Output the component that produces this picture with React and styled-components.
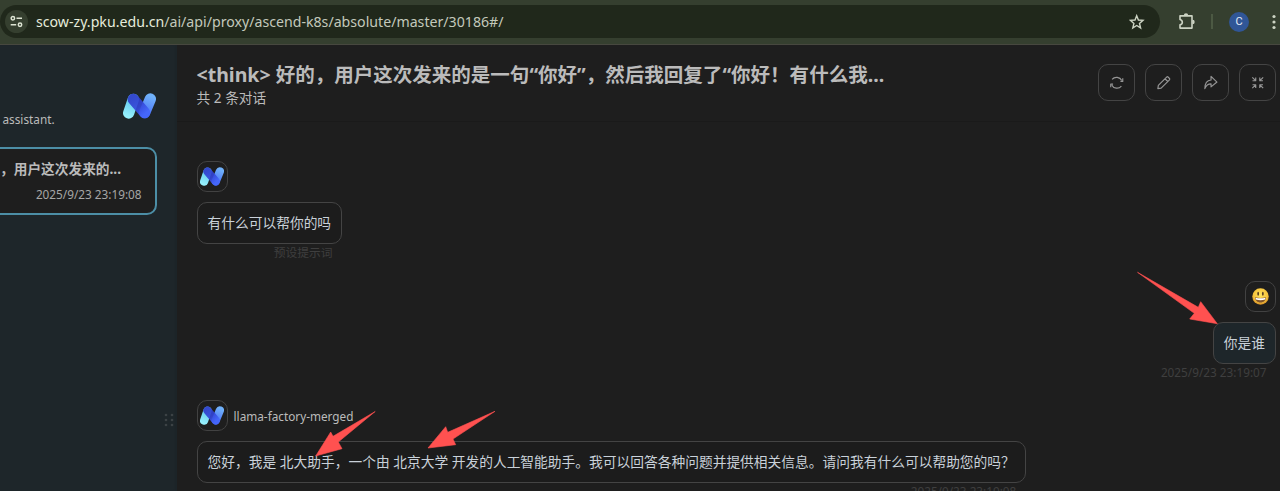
import React from "react";
import styled, { createGlobalStyle } from "styled-components";

const Global = createGlobalStyle`
  *, *::before, *::after { box-sizing: border-box; }
  body {
    margin: 0;
    overflow: hidden;
    background: #1e1e1e;
    color: #bbb;
    font-family: "Noto Sans", "Noto Sans CJK SC", sans-serif;
  }
  svg { display: block; }
`;

const Page = styled.div`
  position: relative;
  display: flex;
  flex-direction: column;
  width: 1280px;
  height: 491px;
  overflow: hidden;
`;

const BrowserBar = styled.div`
  flex: none;
  display: flex;
  align-items: center;
  height: 45px;
  padding-bottom: 1px;
  background: #353f2f;
  border-bottom: 1px solid #47483f;
`;

const Omnibox = styled.div`
  display: flex;
  align-items: center;
  width: 1160px;
  height: 33px;
  padding: 0 15px 0 5px;
  border-radius: 17px;
  background: #20281b;
`;

const SiteInfo = styled.span`
  display: grid;
  place-items: center;
  width: 23px;
  height: 23px;
  margin-right: 8px;
  border-radius: 50%;
  background: #353f2f;
`;

const Url = styled.span`
  flex: 1;
  font-size: 14.17px;
  line-height: 20px;
  white-space: nowrap;
  color: #c3c9bb;
`;

const Host = styled.span`
  color: #e6ecdc;
`;

const BarTools = styled.div`
  display: flex;
  align-items: center;
  flex: 1;
  padding-left: 18px;
`;

const BarDivider = styled.i`
  width: 2px;
  height: 15px;
  margin: 0 16px 0 15px;
  background: #4c5943;
`;

const Profile = styled.span`
  display: grid;
  place-items: center;
  width: 20px;
  height: 20px;
  margin-right: 23px;
  border-radius: 50%;
  background: #305697;
  color: #e4eaf5;
  font: 11px/20px Roboto, sans-serif;
`;

const Workspace = styled.div`
  flex: 1;
  display: flex;
  min-height: 0;
`;

const Sidebar = styled.aside`
  flex: none;
  display: flex;
  flex-direction: column;
  width: 176.5px;
  background: #1e262a;
  box-shadow: inset -2px 0 2px rgba(0, 0, 0, 0.05);
`;

const SidebarHead = styled.div`
  display: flex;
  justify-content: space-between;
  height: 102px;
  padding: 47.5px 20.5px 0 2.5px;
`;

const Tagline = styled.div`
  padding-top: 17.5px;
  font-size: 11.78px;
  line-height: 18px;
`;

const ChatItem = styled.div`
  width: 177px;
  height: 68px;
  margin-left: -20px;
  padding: 10px 13.500px 0 18px;
  border: 2px solid #4c8ea6;
  border-radius: 10px;
  background: #1e1e1e;
`;

const ChatName = styled.div`
  font-size: 13.7px;
  font-weight: 700;
  line-height: 20px;
  white-space: nowrap;
`;

const ChatDate = styled.div`
  margin-top: 7px;
  font-size: 11.78px;
  line-height: 16px;
  text-align: right;
  color: #a6a6a6;
`;

const DragHandle = styled.div`
  margin: auto 1.5px 64px auto;
`;

const Chat = styled.main`
  flex: 1;
  display: flex;
  flex-direction: column;
  min-width: 0;
`;

const ChatHeader = styled.header`
  flex: none;
  display: flex;
  justify-content: space-between;
  height: 77px;
  padding: 15.5px 4px 0 20px;
  border-bottom: 1px solid #1a1a1a;
`;

const Title = styled.h1`
  margin: 0;
  font-size: 19.53px;
  font-weight: 700;
  line-height: 27px;
  white-space: nowrap;
`;

const Subtitle = styled.div`
  font-size: 13.7px;
  line-height: 20px;
`;

const Actions = styled.div`
  display: flex;
  gap: 9.6px;
  padding-top: 3.5px;
`;

const ActionButton = styled.button`
  display: grid;
  place-items: center;
  width: 37.4px;
  height: 37.4px;
  padding: 0;
  border: 1px solid #444;
  border-radius: 10px;
  background: transparent;
  color: #969696;
`;

const Messages = styled.div`
  flex: 1;
  display: flex;
  flex-direction: column;
  padding: 39px 4px 0 20px;
`;

const Message = styled.article`
  display: flex;
  flex-direction: column;
  flex: none;
  align-items: ${(p) => (p.$user ? "flex-end" : "flex-start")};
  align-self: ${(p) => (p.$user ? "flex-end" : "flex-start")};
  height: ${(p) => p.$height}px;
`;

const Author = styled.div`
  display: flex;
  align-items: center;
  gap: 5.7px;
  font-size: 11.78px;
`;

const Avatar = styled.div`
  display: grid;
  place-items: center;
  width: 31.4px;
  height: 31px;
  border: 1px solid #424242;
  border-radius: 10px;
`;

const Bubble = styled.div`
  height: 42px;
  margin-top: 10px;
  padding: 0 10px;
  border: 1px solid #444;
  border-radius: 10px;
  background: ${(p) => (p.$user ? "#1e262a" : "#1c1c1c")};
  color: #c9d1d9;
  font-size: 13.74px;
  line-height: 40px;
  white-space: nowrap;
`;

const Stamp = styled.div`
  align-self: flex-end;
  padding-right: 9.5px;
  font-size: 11.78px;
  line-height: 17px;
  color: #3f3f3f;
`;

const Arrows = styled.svg`
  position: absolute;
  inset: 0;
  pointer-events: none;
`;

function Logo({ id, width, height }) {
  return (
    <svg width={width} height={height} viewBox="0 0 99 78">
      <defs>
        <linearGradient id={`${id}a`} gradientUnits="userSpaceOnUse" x1="30" y1="20" x2="12" y2="70">
          <stop offset="0" stopColor="#62c9ee" />
          <stop offset="1" stopColor="#96f0fc" />
        </linearGradient>
        <linearGradient id={`${id}b`} gradientUnits="userSpaceOnUse" x1="85" y1="10" x2="60" y2="70">
          <stop offset="0" stopColor="#70b1fa" />
          <stop offset="1" stopColor="#4468f8" />
        </linearGradient>
        <linearGradient id={`${id}c`} gradientUnits="userSpaceOnUse" x1="28" y1="16" x2="66" y2="62">
          <stop offset="0" stopColor="#2f3ccb" />
          <stop offset="0.55" stopColor="#3347da" />
          <stop offset="1" stopColor="#4465fb" />
        </linearGradient>
      </defs>
      <g fill="none" strokeWidth="34" strokeLinecap="round">
        <path d="M31 19 17 60" stroke={`url(#${id}a)`} />
        <path d="M82 18 65 59" stroke={`url(#${id}b)`} />
        <path d="M31 19 65 59" stroke={`url(#${id}c)`} strokeOpacity="0.9" />
      </g>
    </svg>
  );
}

const ICONS = {
  reload: (
    <>
      <path d="M3.2 4.600A6 6 0 0 1 13.200 5.800M12.800 11.400A6 6 0 0 1 2.800 10.200" />
      <path d="M14.200 3.400v3.200h-2.400M1.800 12.600V9.400h2.400" />
    </>
  ),
  rename: (
    <path d="M1.900 14.100l.5-3.300L11 2.100a1 1 0 0 1 1.400 0l1.500 1.500a1 1 0 0 1 0 1.400L5.300 13.500 1.900 14.100ZM9.300 3.900l2.800 2.800" />
  ),
  share: (
    <path d="M8.300 1.500 14.400 7.300 8.300 12.300V9.200C5.500 9.200 3.200 10.700 1.900 14.100 1.900 9.400 3.800 5.600 8.300 5.200V1.500Z" />
  ),
  shrink: (
    <path d="M2.400 2.400 5.800 5.800M2.600 5.900H5.900V2.600M13.600 2.400 10.200 5.800M13.400 5.900H10.100V2.600M2.400 13.600 5.800 10.200M2.600 10.100H5.900v3.300M13.600 13.600 10.200 10.200M13.400 10.100H10.100v3.300" />
  ),
};

function Icon({ name }) {
  return (
    <svg width="15.5" height="15.5" viewBox="0 0 16 16" fill="none" stroke="currentColor" strokeWidth="1.2" strokeLinejoin="round">
      {ICONS[name]}
    </svg>
  );
}

function Smiley() {
  return (
    <svg width="17" height="17" viewBox="0 0 34 34">
      <defs>
        <radialGradient id="face" cx="0.5" cy="0.4" r="0.6">
          <stop offset="0" stopColor="#ffe45e" />
          <stop offset="0.7" stopColor="#f6c43c" />
          <stop offset="1" stopColor="#d08a26" />
        </radialGradient>
      </defs>
      <circle cx="17" cy="17" r="16.5" fill="url(#face)" />
      <ellipse cx="12.3" cy="11.5" rx="1.8" ry="4" fill="#593d20" />
      <ellipse cx="21.7" cy="11.5" rx="1.8" ry="4" fill="#593d20" />
      <path d="M6 18.5q11 3 22 0c0 6-4.5 10.5-11 10.5S6 24.500 6 18.500Z" fill="#80542a" />
      <path d="M7 19.400q10 2.500 20 0l-.7 3.600q-9.300 2.500-18.600 0Z" fill="#fff" />
    </svg>
  );
}

export default function App() {
  return (
    <Page lang="zh-CN">
      <Global />
      <BrowserBar>
        <Omnibox>
          <SiteInfo>
            <svg width="13" height="13" viewBox="0 0 13 13" fill="none" stroke="#dde4d3" strokeWidth="1.5">
              <circle cx="2.900" cy="3.300" r="1.700" />
              <path d="M6.500 3.300H12M.7 9.700h5.500" />
              <circle cx="10" cy="9.700" r="1.700" />
            </svg>
          </SiteInfo>
          <Url>
            <Host>scow-zy.pku.edu.cn</Host>/ai/api/proxy/ascend-k8s/absolute/master/30186#/
          </Url>
          <svg width="16" height="16" viewBox="0 0 16 16" fill="none" stroke="#ccd3c3" strokeWidth="1.400">
            <path d="M7.700 1.700 9.400 6 14 6.400 10.500 9.400 11.600 13.900 7.700 11.500 3.800 13.900 4.900 9.400 1.400 6.400 6 6Z" />
          </svg>
        </Omnibox>
        <BarTools>
          <svg width="18" height="18" viewBox="0 0 18 18" fill="none" stroke="#ccd3c3" strokeWidth="1.600" strokeLinejoin="round">
            <path d="M2 2.900H14V15.100H2V11.900C5.100 11.200 5.100 7.200 2 6.500Z" />
            <path d="M6.600 2.400a1.400 1.400 0 0 1 2.800 0M14.500 7.600a1.400 1.400 0 0 1 0 2.800" fill="#ccd3c3" />
          </svg>
          <BarDivider />
          <Profile>C</Profile>
          <svg width="4" height="16" viewBox="0 0 4 16" fill="#ccd3c3">
            <circle cx="2" cy="2.500" r="1.600" />
            <circle cx="2" cy="8" r="1.600" />
            <circle cx="2" cy="13.500" r="1.600" />
          </svg>
        </BarTools>
      </BrowserBar>
      <Workspace>
        <Sidebar>
          <SidebarHead>
            <Tagline>assistant.</Tagline>
            <Logo id="side" width={33} height={26} />
          </SidebarHead>
          <ChatItem>
            <ChatName>，用户这次发来的...</ChatName>
            <ChatDate>2025/9/23 23:19:08</ChatDate>
          </ChatItem>
          <DragHandle>
            <svg width="11" height="14" viewBox="0 0 11 14" fill="#3c4245">
              {[2, 7, 12].map((y) => (
                <React.Fragment key={y}>
                  <circle cx="2" cy={y} r="1.300" />
                  <circle cx="8" cy={y} r="1.300" />
                </React.Fragment>
              ))}
            </svg>
          </DragHandle>
        </Sidebar>
        <Chat>
          <ChatHeader>
            <div>
              <Title>&lt;think&gt; 好的，用户这次发来的是一句“你好”，然后我回复了“你好！有什么我...</Title>
              <Subtitle>共 2 条对话</Subtitle>
            </div>
            <Actions>
              {["reload", "rename", "share", "shrink"].map((name) => (
                <ActionButton key={name}>
                  <Icon name={name} />
                </ActionButton>
              ))}
            </Actions>
          </ChatHeader>
          <Messages>
            <Message $height={120}>
              <Author>
                <Avatar><Logo id="m1" width={24} height={19} /></Avatar>
              </Author>
              <Bubble>有什么可以帮你的吗</Bubble>
              <Stamp>预设提示词</Stamp>
            </Message>
            <Message $user $height={119}>
              <Author>
                <Avatar><Smiley /></Avatar>
              </Author>
              <Bubble $user>你是谁</Bubble>
              <Stamp>2025/9/23 23:19:07</Stamp>
            </Message>
            <Message $height={120}>
              <Author>
                <Avatar><Logo id="m2" width={24} height={19} /></Avatar>
                llama-factory-merged
              </Author>
              <Bubble>您好，我是 北大助手，一个由 北京大学 开发的人工智能助手。我可以回答各种问题并提供相关信息。请问我有什么可以帮助您的吗？</Bubble>
              <Stamp>2025/9/23 23:19:08</Stamp>
            </Message>
          </Messages>
        </Chat>
      </Workspace>
      <Arrows width="1280" height="491" fill="#ff5150" stroke="#ff5150" strokeWidth="0.600" strokeLinejoin="round">
        <path d="M1137.500 272.300 1198.300 307.300 1200.700 301.700 1217.300 323.700 1189.700 319 1194.300 313.300Z" />
        <path d="M375.200 411.500 338.300 442 342 448.700 315.700 456 330.700 432 333 436.300Z" />
        <path d="M495 411.300 453 439 455.700 444.700 428 448 445.700 426.700 447.700 432.300Z" />
      </Arrows>
    </Page>
  );
}
